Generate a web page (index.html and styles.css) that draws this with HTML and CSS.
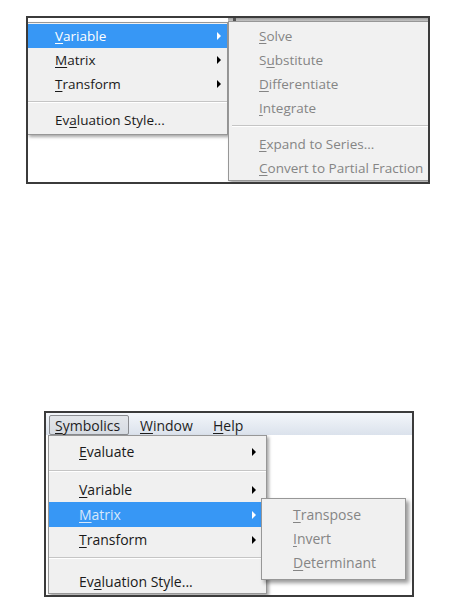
FILE: index.html
```html
<!DOCTYPE html>
<html>
<head>
<meta charset="utf-8">
<link rel="stylesheet" href="styles.css">
</head>
<body>
<div class="shot shot-top">
  <div class="strip"><span class="tick"></span></div>
  <div class="menu main-menu">
    <div class="item active"><span><u>V</u>ariable</span><span class="arrow"></span></div>
    <div class="item"><span><u>M</u>atrix</span><span class="arrow"></span></div>
    <div class="item"><span><u>T</u>ransform</span><span class="arrow"></span></div>
    <div class="sep"></div>
    <div class="item"><span>Ev<u>a</u>luation Style...</span></div>
  </div>
  <div class="menu sub-menu">
    <div class="item dim"><span><u>S</u>olve</span></div>
    <div class="item dim"><span>S<u>u</u>bstitute</span></div>
    <div class="item dim"><span><u>D</u>ifferentiate</span></div>
    <div class="item dim"><span><u>I</u>ntegrate</span></div>
    <div class="sep"></div>
    <div class="item dim"><span><u>E</u>xpand to Series...</span></div>
    <div class="item dim"><span><u>C</u>onvert to Partial Fraction</span></div>
  </div>
</div>

<div class="shot shot-bottom">
  <div class="menubar">
    <div class="bar-item pressed"><u>S</u>ymbolics</div>
    <div class="bar-item window"><u>W</u>indow</div>
    <div class="bar-item"><u>H</u>elp</div>
  </div>
  <div class="menu drop-menu">
    <div class="item"><span><u>E</u>valuate</span><span class="arrow"></span></div>
    <div class="sep sep-a"></div>
    <div class="item"><span><u>V</u>ariable</span><span class="arrow"></span></div>
    <div class="item active dimactive"><span><u>M</u>atrix</span><span class="arrow"></span></div>
    <div class="item"><span><u>T</u>ransform</span><span class="arrow"></span></div>
    <div class="sep sep-b"></div>
    <div class="item"><span>Ev<u>a</u>luation Style...</span></div>
  </div>
  <div class="menu sub-menu2">
    <div class="item dim"><span><u>T</u>ranspose</span></div>
    <div class="item dim"><span><u>I</u>nvert</span></div>
    <div class="item dim"><span><u>D</u>eterminant</span></div>
  </div>
</div>
</body>
</html>
```

FILE: styles.css
```css
html, body {
  margin: 0;
  padding: 0;
  background: #ffffff;
}
body {
  font-family: "Open Sans", "Noto Sans", "DejaVu Sans", sans-serif;
  color: #1a1a1a;
}
u {
  text-decoration: underline;
  text-underline-offset: 2px;
  text-decoration-thickness: 1px;
}

.shot {
  position: relative;
  box-sizing: border-box;
  border: 2px solid #3b3b3b;
  background: #ffffff;
  overflow: hidden;
}
.shot-top {
  margin: 16px 0 0 26px;
  width: 404px;
  height: 168px;
}
.shot-bottom {
  margin: 227px 0 0 44px;
  width: 370px;
  height: 186px;
}

.strip {
  position: absolute;
  left: 200px;
  right: 0;
  top: -1px;
  height: 4px;
  background: linear-gradient(#8f8f8f, #c9c9c9);
}
.tick {
  position: absolute;
  left: 5px;
  top: 0;
  width: 3px;
  height: 4px;
  background: #555;
}

.menu {
  position: absolute;
  box-sizing: border-box;
  background: #f0f0f0;
  border: 1px solid #979797;
  box-shadow: 2px 2px 3px rgba(0, 0, 0, 0.35);
}
.item {
  display: flex;
  align-items: center;
  height: 24px;
  white-space: nowrap;
}
.item .arrow {
  margin-left: auto;
  width: 0;
  height: 0;
  border-top: 4px solid transparent;
  border-bottom: 4px solid transparent;
  border-left: 4px solid #000;
}
.item.active {
  background: #3797f5;
  color: #ffffff;
}
.item.active .arrow {
  border-left-color: #ffffff;
}
.item.dim {
  color: #858585;
}
.sep {
  height: 12px;
  display: flex;
  flex-direction: column;
  justify-content: center;
}
.sep::before {
  content: "";
  display: block;
  height: 1px;
  background: #c5c5c5;
  border-bottom: 1px solid #ffffff;
}

/* top screenshot */
.main-menu {
  left: -1px;
  top: 4px;
  width: 201px;
  padding: 1px 0 2px;
  font-size: 13.5px;
}
.main-menu .item {
  padding: 0 6px 0 27px;
}
.sub-menu {
  left: 200px;
  top: 3px;
  width: 230px;
  padding: 2px 0 0;
  font-size: 13.5px;
  background: #f1f1f1;
}
.sub-menu .item {
  padding-left: 30px;
}
.sub-menu .sep::before {
  margin-left: 3px;
}

/* bottom screenshot */
.menubar {
  display: flex;
  align-items: flex-end;
  height: 22px;
  padding-left: 3px;
  background: linear-gradient(#f3f6fa, #dbe2ec);
  font-size: 14px;
  color: #1e1e1e;
}
.bar-item {
  box-sizing: border-box;
  height: 20px;
  display: flex;
  align-items: center;
  padding: 0 5px;
}
.bar-item.pressed {
  width: 80px;
  border: 1px solid #8a8c90;
  border-radius: 2px;
  background: linear-gradient(#e3e6ea, #d6dbe2);
}
.bar-item.window {
  width: 73px;
  margin-left: 6px;
}

.drop-menu {
  left: 2px;
  top: 22px;
  width: 219px;
  padding: 3px 0 0;
  font-size: 14px;
}
.drop-menu .item {
  height: 25px;
  padding: 0 10px 0 30px;
}
.drop-menu .item:last-child {
  height: 23px;
}
.drop-menu .sep-a {
  height: 13px;
}
.drop-menu .sep-b {
  height: 18px;
  justify-content: flex-start;
  padding-top: 5px;
  box-sizing: border-box;
}
.item.dimactive {
  color: #d6e8fb;
}
.sub-menu2 {
  left: 215px;
  top: 85px;
  width: 145px;
  padding: 3px 0 5px;
  font-size: 14px;
  box-shadow: 3px 3px 4px rgba(0, 0, 0, 0.4);
}
.sub-menu2 .item {
  padding-left: 31px;
}
```
